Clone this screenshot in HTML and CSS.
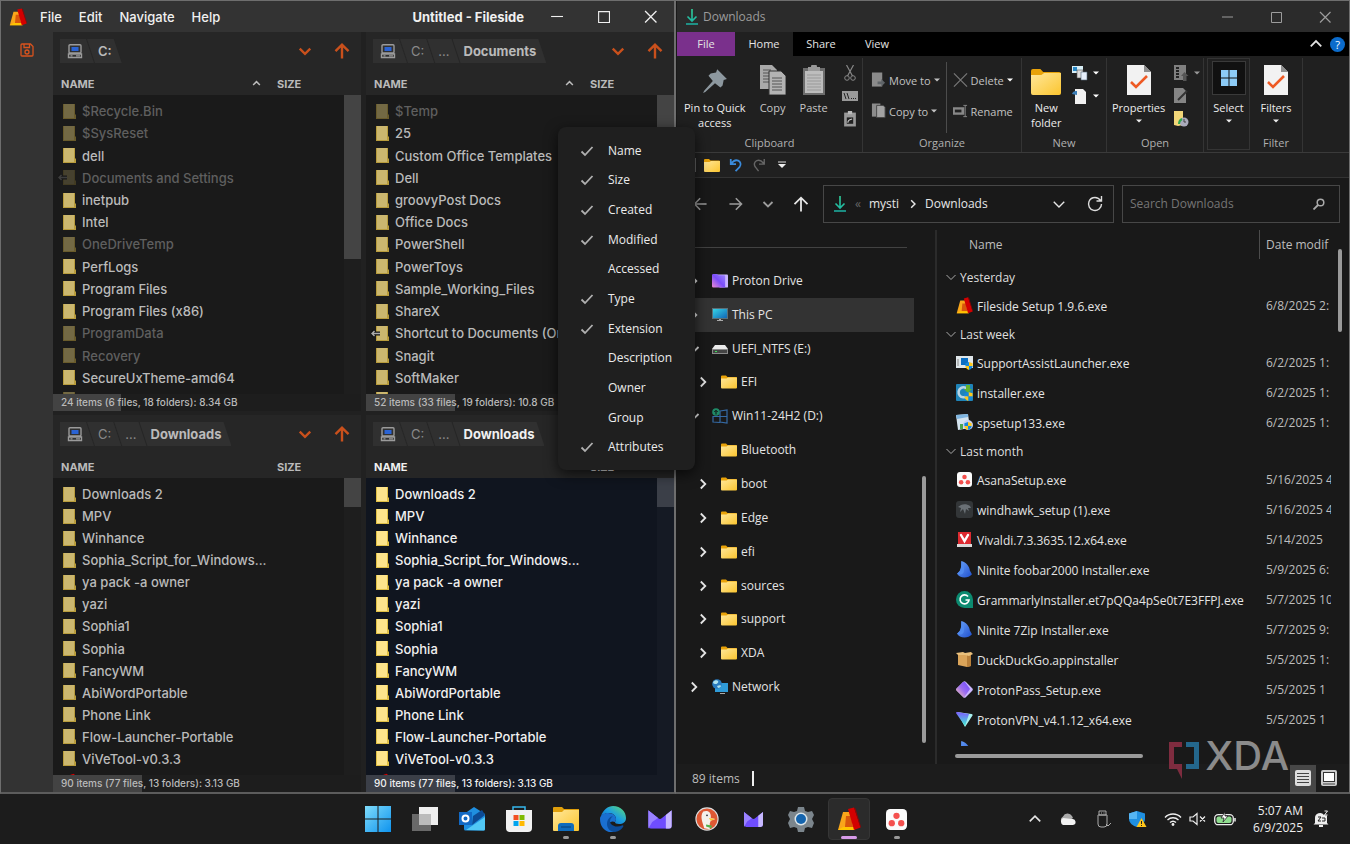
FILE: index.html
```html
<!DOCTYPE html>
<html lang="en">
<head>
<meta charset="utf-8">
<title>Desktop</title>
<link rel="stylesheet" href="styles.css">
</head>
<body>
<svg class="defs" aria-hidden="true">
  <linearGradient id="g-fold" x1="0" y1="0" x2="1" y2="1"><stop offset="0" stop-color="#ffe79a"/><stop offset="1" stop-color="#fbc52f"/></linearGradient>
  <linearGradient id="g-edge" x1="0" y1="1" x2="1" y2="0"><stop offset="0" stop-color="#0b57b5"/><stop offset=".5" stop-color="#1b9de2"/><stop offset="1" stop-color="#5fe070"/></linearGradient>
  <linearGradient id="g-win" x1="0" y1="0" x2="1" y2="1"><stop offset="0" stop-color="#7fdcfb"/><stop offset="1" stop-color="#0e93ee"/></linearGradient>
  <linearGradient id="g-proton" x1="0" y1="1" x2="1" y2="0"><stop offset="0" stop-color="#f08bd2"/><stop offset=".5" stop-color="#7a4dfa"/><stop offset="1" stop-color="#9d86ff"/></linearGradient>
  <linearGradient id="g-pass" x1="0" y1="1" x2="1" y2="0"><stop offset="0" stop-color="#ffc9a8"/><stop offset=".5" stop-color="#9b6cf2"/><stop offset="1" stop-color="#6d4aff"/></linearGradient>
  <linearGradient id="g-vpn" x1="0" y1="0" x2="0" y2="1"><stop offset="0" stop-color="#7d5cff"/><stop offset="1" stop-color="#3ff0d0"/></linearGradient>
  <linearGradient id="g-nin" x1="0" y1="0" x2="1" y2="1"><stop offset="0" stop-color="#6ea5f7"/><stop offset="1" stop-color="#1e4fd0"/></linearGradient>
  <linearGradient id="g-screen" x1="0" y1="0" x2="1" y2="1"><stop offset="0" stop-color="#35d3e6"/><stop offset="1" stop-color="#1166b5"/></linearGradient>
  <linearGradient id="g-dl" x1="0" y1="0" x2="0" y2="16" gradientUnits="userSpaceOnUse"><stop offset="0" stop-color="#2fd09a"/><stop offset="1" stop-color="#1bb0a4"/></linearGradient>
  <symbol id="logo" viewBox="0 0 24 24"><path d="M6 5h7l5 18H1z" fill="#f9a51a"/><path d="M9 9h5l2 11H8z" fill="#d8560b"/><path d="M7 20h10l1 3H1l5-3z" fill="#ffc400"/><path d="M11 2l6-1.500 6.500 20L17 23z" fill="#d30000"/><path d="M17 .5l1.500 1L24 20l-.5.500z" fill="#990000"/></symbol>
  <symbol id="sheet" viewBox="0 0 13 15"><path d="M0 0h12v10l1 1v4H0z" fill="#b89c3c"/><path d="M1 0h10v14H1z" fill="#cbb76f"/></symbol>
  <symbol id="sheet-lit" viewBox="0 0 13 15"><path d="M0 0h12v10l1 1v4H0z" fill="#e0bf45"/><path d="M1 0h10v14H1z" fill="#fde48c"/></symbol>
  <symbol id="sheet-link" viewBox="0 0 18 15"><path d="M5 0h12v10l1 1v4H5z" fill="#b89c3c"/><path d="M6 0h10v14H6z" fill="#cbb76f"/><path d="M0 7.500h9M3.500 5L1 7.500 3.500 10" stroke="#111" stroke-width="4" fill="none"/><path d="M1 7.500h8M3.500 5L1 7.500 3.500 10" stroke="#aaa" stroke-width="1.500" fill="none"/></symbol>
  <symbol id="pc" viewBox="0 0 16 16"><path d="M3 1.700h10a1 1 0 011 1V9a1 1 0 01-1 1H3a1 1 0 01-1-1V2.700a1 1 0 011-1zM1.500 11h13v3.500h-13z" fill="none" stroke="#9b9b9b" stroke-width="1.400"/><path d="M4.500 4h7v4h-7z" fill="#2a63d4"/><path d="M3.500 12.800h2M9 12.800h4" stroke="#9b9b9b" stroke-width="1.200"/></symbol>
  <symbol id="chev" viewBox="0 0 12 12"><path d="M1.500 4L6 8.500 10.500 4" fill="none" stroke="currentColor" stroke-width="var(--w,2)"/></symbol>
  <symbol id="chevr" viewBox="0 0 12 12"><path d="M3.800 1.500L8.300 6l-4.500 4.500" fill="none" stroke="currentColor" stroke-width="1.800"/></symbol>
  <symbol id="up" viewBox="0 0 16 16"><path d="M8 15.500V2M1.500 8.200L8 1.700l6.500 6.500" fill="none" stroke="currentColor" stroke-width="var(--w,2.400)"/></symbol>
  <symbol id="check" viewBox="0 0 14 12"><path d="M1.500 6.500l3.500 3.500 7.500-8" fill="none" stroke="#b0b0b0" stroke-width="1.800"/></symbol>
  <symbol id="folder" viewBox="0 0 16 13"><path d="M0 1a1 1 0 011-1h4l1.500 1.500H15a1 1 0 011 1V5H0z" fill="#e8a209"/><path d="M0 3h5.500L7 2h9v10a1 1 0 01-1 1H1a1 1 0 01-1-1z" fill="url(#g-fold)"/></symbol>
  <symbol id="dl" viewBox="0 0 12 16"><path d="M6 0v12M1.500 7.500L6 12l4.500-4.500M0 15h12" fill="none" stroke="url(#g-dl)" stroke-width="1.600"/></symbol>
  <symbol id="min" viewBox="0 0 12 12"><path d="M1 6h11" stroke="currentColor"/></symbol>
  <symbol id="max" viewBox="0 0 12 12"><path d="M1.500 1.500h10v10h-10z" fill="none" stroke="currentColor"/></symbol>
  <symbol id="close" viewBox="0 0 12 12"><path d="M1 1l10.500 10.500M11.500 1L1 11.500" stroke="currentColor" stroke-width="1.200"/></symbol>
  <symbol id="tri" viewBox="0 0 6 4"><path d="M0 .5h6L3 3.500z" fill="currentColor"/></symbol>
  <symbol id="doc" viewBox="0 0 24 30"><path d="M0 0h17l7 7v23H0z" fill="#f2f2f2"/><path d="M17 0v7h7z" fill="#8f8f8f"/><path d="M4 17l5 5L20 11" fill="none" stroke="#ee5a24" stroke-width="2.600"/></symbol>
  <symbol id="asana" viewBox="0 0 20 20"><rect width="20" height="20" rx="4" fill="#fbfbfb"/><circle cx="10" cy="6.500" r="3" fill="#f4504e"/><circle cx="5.500" cy="13.500" r="3" fill="#f4504e"/><circle cx="14.500" cy="13.500" r="3" fill="#f4504e"/></symbol>
  <symbol id="ninite" viewBox="0 0 16 16"><path d="M5 0c4 1 8 5 8 9l2 3.500c-2 2-4 3-7 3S2 14 1 12l2.500-2.500C5 7 5 4 5 0z" fill="url(#g-nin)"/><path d="M5 0c0 4 0 7-1.500 9.500L1 12c4 1.500 6 .5 6.500-2.500S7 3 5 0z" fill="#4f8af0"/></symbol>
  <symbol id="shield" viewBox="0 0 10 10"><path d="M5 0l4.500 1.500V5H5z" fill="#ffc91a"/><path d="M5 0L.5 1.500V5H5z" fill="#1688dc"/><path d="M.5 5H5v5C2 9 .5 7 .5 5z" fill="#ffc91a"/><path d="M5 5h4.500C9.500 7 8 9 5 10z" fill="#1688dc"/></symbol>
  <symbol id="mail" viewBox="0 0 24 20"><path d="M0 1l10 8a3 3 0 004 0L24 1v16a3 3 0 01-3 3H3a3 3 0 01-3-3z" fill="#6f4dff"/><path d="M18 6l6-5v16a3 3 0 01-3 3h-3z" fill="#c7b8ff"/><path d="M0 1l10 8-6 4-4 7z" fill="#9a82ff"/></symbol>
</svg>

<main class="desktop">
  <section class="win fileside" aria-label="Fileside">
    <header class="titlebar">
      <svg class="i18"><use href="#logo"/></svg>
      <nav class="menubar"><button>File</button><button>Edit</button><button>Navigate</button><button>Help</button></nav>
      <h1>Untitled - Fileside</h1>
      <div class="winbtns"><button aria-label="Minimize"><svg><use href="#min"/></svg></button><button aria-label="Maximize"><svg><use href="#max"/></svg></button><button aria-label="Close"><svg><use href="#close"/></svg></button></div>
    </header>
    <div class="fs-body">
      <aside class="rail"><button aria-label="Save layout"><svg viewBox="0 0 14 14"><path d="M2 1h8.500L13 3.500V12a1 1 0 01-1 1H2a1 1 0 01-1-1V2a1 1 0 011-1zM4 1v3.500h5.500V1" fill="none" stroke="#d9531e" stroke-width="1.300"/><circle cx="7" cy="9" r="2" fill="none" stroke="#d9531e" stroke-width="1.300"/></svg></button></aside>
      <div class="panes">
        <section class="pane">
          <div class="crumbs"><a href="#"><svg><use href="#pc"/></svg></a><a href="#" class="here plain">C:</a><span class="tools"><button aria-label="History"><svg class="i14"><use href="#chev"/></svg></button><button aria-label="Up"><svg class="i16"><use href="#up"/></svg></button></span></div>
          <div class="cols"><span>NAME<svg class="sort"><use href="#chev"/></svg></span><span>SIZE</span></div>
          <div class="listing"><ul>
            <li class="dim"><svg><use href="#sheet"/></svg>$Recycle.Bin</li>
            <li class="dim"><svg><use href="#sheet"/></svg>$SysReset</li>
            <li><svg><use href="#sheet"/></svg>dell</li>
            <li class="dim faint"><svg class="lnk"><use href="#sheet-link"/></svg>Documents and Settings</li>
            <li><svg><use href="#sheet"/></svg>inetpub</li>
            <li><svg><use href="#sheet"/></svg>Intel</li>
            <li class="dim"><svg><use href="#sheet"/></svg>OneDriveTemp</li>
            <li><svg><use href="#sheet"/></svg>PerfLogs</li>
            <li><svg><use href="#sheet"/></svg>Program Files</li>
            <li><svg><use href="#sheet"/></svg>Program Files (x86)</li>
            <li class="dim"><svg><use href="#sheet"/></svg>ProgramData</li>
            <li class="dim"><svg><use href="#sheet"/></svg>Recovery</li>
            <li><svg><use href="#sheet"/></svg>SecureUxTheme-amd64</li>
          </ul><div class="peek dim"><svg><use href="#sheet"/></svg></div><div class="scroll"><i class="long"></i></div></div>
          <div class="stat"><i class="s22"></i><span>24 items (6 files, 18 folders): 8.34 GB</span></div>
        </section>
        <section class="pane">
          <div class="crumbs"><a href="#"><svg><use href="#pc"/></svg></a><a href="#">C:</a><a href="#">...</a><a href="#" class="here">Documents</a><span class="tools"><button aria-label="History"><svg class="i14"><use href="#chev"/></svg></button><button aria-label="Up"><svg class="i16"><use href="#up"/></svg></button></span></div>
          <div class="cols"><span>NAME<svg class="sort"><use href="#chev"/></svg></span><span>SIZE</span></div>
          <div class="listing"><ul>
            <li class="dim"><svg><use href="#sheet"/></svg>$Temp</li>
            <li><svg><use href="#sheet"/></svg>25</li>
            <li><svg><use href="#sheet"/></svg>Custom Office Templates</li>
            <li><svg><use href="#sheet"/></svg>Dell</li>
            <li><svg><use href="#sheet"/></svg>groovyPost Docs</li>
            <li><svg><use href="#sheet"/></svg>Office Docs</li>
            <li><svg><use href="#sheet"/></svg>PowerShell</li>
            <li><svg><use href="#sheet"/></svg>PowerToys</li>
            <li><svg><use href="#sheet"/></svg>Sample_Working_Files</li>
            <li><svg><use href="#sheet"/></svg>ShareX</li>
            <li><svg class="lnk"><use href="#sheet-link"/></svg>Shortcut to Documents (On</li>
            <li><svg><use href="#sheet"/></svg>Snagit</li>
            <li><svg><use href="#sheet"/></svg>SoftMaker</li>
          </ul><div class="peek"><svg><use href="#sheet"/></svg></div><div class="scroll"><i></i></div></div>
          <div class="stat"><i class="s29"></i><span>52 items (33 files, 19 folders): 10.8 GB</span></div>
        </section>
        <section class="pane">
          <div class="crumbs"><a href="#"><svg><use href="#pc"/></svg></a><a href="#">C:</a><a href="#">...</a><a href="#" class="here">Downloads</a><span class="tools"><button aria-label="History"><svg class="i14"><use href="#chev"/></svg></button><button aria-label="Up"><svg class="i16"><use href="#up"/></svg></button></span></div>
          <div class="cols"><span>NAME</span><span>SIZE</span></div>
          <div class="listing"><ul>
            <li><svg><use href="#sheet"/></svg>Downloads 2</li>
            <li><svg><use href="#sheet"/></svg>MPV</li>
            <li><svg><use href="#sheet"/></svg>Winhance</li>
            <li><svg><use href="#sheet"/></svg>Sophia_Script_for_Windows...</li>
            <li><svg><use href="#sheet"/></svg>ya pack -a owner</li>
            <li><svg><use href="#sheet"/></svg>yazi</li>
            <li><svg><use href="#sheet"/></svg>Sophia1</li>
            <li><svg><use href="#sheet"/></svg>Sophia</li>
            <li><svg><use href="#sheet"/></svg>FancyWM</li>
            <li><svg><use href="#sheet"/></svg>AbiWordPortable</li>
            <li><svg><use href="#sheet"/></svg>Phone Link</li>
            <li><svg><use href="#sheet"/></svg>Flow-Launcher-Portable</li>
            <li><svg><use href="#sheet"/></svg>ViVeTool-v0.3.3</li>
          </ul><div class="peek low"><svg><use href="#logo"/></svg></div><div class="scroll"><i></i></div></div>
          <div class="stat"><i class="s29"></i><span>90 items (77 files, 13 folders): 3.13 GB</span></div>
        </section>
        <section class="pane active">
          <div class="crumbs"><a href="#"><svg><use href="#pc"/></svg></a><a href="#">C:</a><a href="#">...</a><a href="#" class="here">Downloads</a><span class="tools"><button aria-label="History"><svg class="i14"><use href="#chev"/></svg></button><button aria-label="Up"><svg class="i16"><use href="#up"/></svg></button></span></div>
          <div class="cols"><span>NAME</span><span>SIZE</span></div>
          <div class="listing"><ul>
            <li><svg><use href="#sheet-lit"/></svg>Downloads 2</li>
            <li><svg><use href="#sheet-lit"/></svg>MPV</li>
            <li><svg><use href="#sheet-lit"/></svg>Winhance</li>
            <li><svg><use href="#sheet-lit"/></svg>Sophia_Script_for_Windows...</li>
            <li><svg><use href="#sheet-lit"/></svg>ya pack -a owner</li>
            <li><svg><use href="#sheet-lit"/></svg>yazi</li>
            <li><svg><use href="#sheet-lit"/></svg>Sophia1</li>
            <li><svg><use href="#sheet-lit"/></svg>Sophia</li>
            <li><svg><use href="#sheet-lit"/></svg>FancyWM</li>
            <li><svg><use href="#sheet-lit"/></svg>AbiWordPortable</li>
            <li><svg><use href="#sheet-lit"/></svg>Phone Link</li>
            <li><svg><use href="#sheet-lit"/></svg>Flow-Launcher-Portable</li>
            <li><svg><use href="#sheet-lit"/></svg>ViVeTool-v0.3.3</li>
          </ul><div class="peek low"><svg><use href="#logo"/></svg></div><div class="scroll"><i></i></div></div>
          <div class="stat"><i class="s29"></i><span>90 items (77 files, 13 folders): 3.13 GB</span></div>
        </section>
      </div>
    </div>
    <menu class="popup">
      <li><svg><use href="#check"/></svg><button>Name</button></li>
      <li><svg><use href="#check"/></svg><button>Size</button></li>
      <li><svg><use href="#check"/></svg><button>Created</button></li>
      <li><svg><use href="#check"/></svg><button>Modified</button></li>
      <li><svg></svg><button>Accessed</button></li>
      <li><svg><use href="#check"/></svg><button>Type</button></li>
      <li><svg><use href="#check"/></svg><button>Extension</button></li>
      <li><svg></svg><button>Description</button></li>
      <li><svg></svg><button>Owner</button></li>
      <li><svg></svg><button>Group</button></li>
      <li><svg><use href="#check"/></svg><button>Attributes</button></li>
    </menu>
  </section>

  <section class="win explorer" aria-label="Downloads">
    <header class="titlebar">
      <svg class="dlicon"><use href="#dl"/></svg><h1>Downloads</h1>
      <div class="winbtns"><button aria-label="Minimize"><svg><use href="#min"/></svg></button><button aria-label="Maximize"><svg><use href="#max"/></svg></button><button aria-label="Close"><svg><use href="#close"/></svg></button></div>
    </header>
    <nav class="tabs"><button class="file">File</button><button class="on">Home</button><button>Share</button><button>View</button>
      <button class="fold" aria-label="Collapse ribbon"><svg class="i14 flip"><use href="#chev"/></svg></button><button class="help">?</button></nav>
    <div class="ribbon">
      <div class="group clip">
        <div class="tools-row">
          <button class="big lit"><svg viewBox="0 0 24 24"><path d="M14 2l9 9-3 1-1 5-2 2-5-4-9 8-2 1 1-2 8-9-4-5 2-2 5-1z" fill="#8d989f"/></svg>Pin to Quick<br>access</button>
          <button class="big"><svg class="tall" viewBox="0 0 26 30"><path d="M0 0h12l5 5v19H0z" fill="#a9a9a9"/><path d="M3 5h8M3 8h9M3 11h9M3 14h9M3 17h9" stroke="#555"/><path d="M9 6h12l5 5v19H9z" fill="#b3b3b3" stroke="#333"/><path d="M12 13h10M12 16h10M12 19h10M12 22h10M12 25h10" stroke="#555"/></svg>Copy</button>
          <button class="big"><svg class="tall" viewBox="0 0 22 30"><path d="M0 3h22v27H0z" fill="#6d6d6d"/><path d="M2 6h18v22H2z" fill="#bdbdbd"/><path d="M5 2h3a3 3 0 016 0h3v4H5z" fill="#999"/><path d="M4 10h14M4 13h14M4 16h14M4 19h14M4 22h14M4 25h14" stroke="#999"/></svg>Paste</button>
          <div class="stack"><button aria-label="Cut"><svg viewBox="0 0 12 16"><path d="M2.500 0L8.500 11M9.500 0L3.500 11" stroke="#888" stroke-width="1.200"/><circle cx="3" cy="13" r="2.300" fill="none" stroke="#888"/><circle cx="9" cy="13" r="2.300" fill="none" stroke="#888"/></svg></button><button aria-label="Copy path"><svg class="wide" viewBox="0 0 16 10"><path d="M0 0h16v10H0z" fill="#999"/><path d="M2 2l2 6M5 2l2 6M9 7.500h1M11 7.500h1M13 7.500h1" stroke="#222"/></svg></button><button aria-label="Paste shortcut"><svg viewBox="0 0 12 15"><path d="M.5 1.500h11v13H.5z" fill="#999"/><path d="M4 0h4v3H4z" fill="#bbb"/><path d="M3 6h6v6H3z" fill="#222"/><path d="M4 11c0-3 2-3 4-3.500" stroke="#ccc" fill="none"/></svg></button></div>
        </div><h2>Clipboard</h2>
      </div>
      <div class="group org">
        <div class="tools-row">
          <div class="pair"><button><svg viewBox="0 0 16 16"><path d="M1 0h11v15H1z" fill="#8b8b8b"/><path d="M15 11l-4-4v2.500H7v3h4V15z" fill="#5f6468"/></svg>Move to<svg class="tri"><use href="#tri"/></svg></button><button><svg viewBox="0 0 16 16"><path d="M1 0h9v14H1z" fill="#8b8b8b"/><path d="M6 2h7l2 2v11H6z" fill="#a2a2a2" stroke="#444"/></svg>Copy to<svg class="tri"><use href="#tri"/></svg></button></div>
          <div class="pair split"><button><svg viewBox="0 0 16 16"><path d="M1 1l14 14M15 1L1 15" stroke="#777" stroke-width="1.300"/></svg>Delete<svg class="tri white"><use href="#tri"/></svg></button><button><svg viewBox="0 0 16 16"><path d="M0 4h12v8H0z" fill="#888"/><path d="M2 6.500h7v3H2z" fill="#222"/><path d="M11 2h4M13 2v12M11 14h4" stroke="#888"/></svg>Rename</button></div>
        </div><h2>Organize</h2>
      </div>
      <div class="group new">
        <div class="tools-row">
          <button class="big lit"><svg class="tall" viewBox="0 -2 16 15" preserveAspectRatio="none"><use href="#folder" width="16" height="13"/></svg>New<br>folder</button>
          <div class="stack two"><button aria-label="New item"><svg viewBox="0 0 16 16"><path d="M0 1h11v7H0z" fill="#d8eef6"/><path d="M1 2h4v4H1z" fill="#2b88c4"/><path d="M5 5h6v8H5z" fill="#ddd" stroke="#555" stroke-width=".6"/><path d="M9 7h6v8H9z" fill="#e6effb" stroke="#567" stroke-width=".6"/></svg><svg class="tri"><use href="#tri"/></svg></button><button aria-label="Easy access"><svg viewBox="0 0 16 16"><path d="M3 1h8l3 3v12H3z" fill="#f1f1f1"/><path d="M0 6c1-3 3-3 5-3v4z" fill="#3c7fb8"/></svg><svg class="tri"><use href="#tri"/></svg></button></div>
        </div><h2>New</h2>
      </div>
      <div class="group open">
        <div class="tools-row">
          <button class="big lit"><svg class="tall"><use href="#doc"/></svg>Properties<svg class="tri"><use href="#tri"/></svg></button>
          <div class="stack"><button aria-label="Open"><svg viewBox="0 0 14 16"><path d="M0 0h12v15H0z" fill="#808080"/><path d="M2 3h3M2 6h3M2 9h3M2 12h3" stroke="#222" stroke-width="2"/><path d="M10.500 7l4 4h-2v5H9v-5H7z" fill="#555"/></svg><svg class="tri grey"><use href="#tri"/></svg></button><button aria-label="Edit"><svg viewBox="0 0 14 16"><path d="M0 0h9l3 3v12H0z" fill="#858585"/><path d="M4 12L13 3" stroke="#333" stroke-width="2"/></svg></button><button aria-label="History"><svg viewBox="0 0 14 16"><path d="M0 0h9v14l-5 1-4-1z" fill="#f2d678"/><circle cx="10" cy="11" r="4.500" fill="#aab"/><path d="M10 8v3h2" stroke="#444" fill="none"/><path d="M5 13c0-3 1-4 3-5" stroke="#2fa84f" stroke-width="2" fill="none"/></svg></button></div>
        </div><h2>Open</h2>
      </div>
      <div class="group sel">
        <button class="big lit"><span class="box"><svg viewBox="0 0 16 16"><path d="M0 0h7.500v7.500H0zM8.500 0H16v7.500H8.500zM0 8.500h7.500V16H0zM8.500 8.500H16V16H8.500z" fill="#8ccbf6"/></svg></span>Select<svg class="tri"><use href="#tri"/></svg></button>
      </div>
      <div class="group filt">
        <div class="tools-row"><button class="big lit"><svg class="tall"><use href="#doc"/></svg>Filters<svg class="tri"><use href="#tri"/></svg></button></div><h2>Filter</h2>
      </div>
    </div>
    <div class="quick"><i></i><button aria-label="New folder"><svg class="fold16"><use href="#folder"/></svg></button><button aria-label="Undo"><svg class="i14" viewBox="0 0 16 16"><path d="M2 1v6h6M2.500 6.500C5 3 8 2 10.500 3s4 4.500 1.500 7.500L7.500 15" fill="none" stroke="#3a8bdc" stroke-width="2"/></svg></button><button aria-label="Redo"><svg class="i14" viewBox="0 0 16 16"><path d="M14 1v6H8M13.500 6.500C11 3 8 2 5.500 3S1.500 7.500 4 10.500L7.500 15" fill="none" stroke="#666" stroke-width="1.600"/></svg></button><button aria-label="Customize"><svg class="cust" viewBox="0 0 8 8"><path d="M0 1h8" stroke="#ddd"/><path d="M0 3h8L4 7z" fill="#eee"/></svg></button></div>
    <div class="navrow">
      <button class="grey" aria-label="Back"><svg class="i14 left"><use href="#up"/></svg></button><button class="grey" aria-label="Forward"><svg class="i14 right"><use href="#up"/></svg></button><button class="grey" aria-label="Recent"><svg class="i12"><use href="#chev"/></svg></button><button aria-label="Up"><svg class="i16"><use href="#up"/></svg></button>
      <div class="addr"><svg class="dlicon"><use href="#dl"/></svg><span class="more">«</span><a href="#">mysti</a><svg class="i10"><use href="#chevr"/></svg><a href="#">Downloads</a><button class="last" aria-label="Previous locations"><svg class="i14"><use href="#chev"/></svg></button><button aria-label="Refresh"><svg class="i16" viewBox="0 0 16 16"><path d="M14.500 8A6.500 6.500 0 112 5.500C3 3 5.500 1.500 8 1.500c2.500 0 4.500 1.300 6 3.500M14.500 0v5h-5" fill="none" stroke="#ddd" stroke-width="1.400"/></svg></button></div>
      <label class="search"><input type="text" placeholder="Search Downloads" aria-label="Search Downloads"><svg class="i12" viewBox="0 0 12 12"><circle cx="7.500" cy="4.500" r="3.300" fill="none" stroke="#aaa" stroke-width="1.500"/><path d="M5 7L.5 11.500" stroke="#aaa" stroke-width="1.800"/></svg></label>
    </div>
    <div class="ex-body">
      <nav class="tree"><hr>
        <ul>
          <li><svg class="i12"><use href="#chevr"/></svg><svg class="ic" viewBox="0 0 17 16"><path d="M5 1h11a1 1 0 011 1v12a1 1 0 01-1 1H8z" fill="#c9b5ff"/><path d="M0 2a1.500 1.500 0 011.500-1.500H5L7 2h6a1 1 0 011 1v12H1.500A1.500 1.500 0 010 13.500z" fill="url(#g-proton)"/></svg>Proton Drive</li>
          <li class="cur"><svg class="i12"><use href="#chevr"/></svg><svg class="ic" viewBox="0 0 16 14"><path d="M0 0h16v11H0z" fill="#5a7078"/><path d="M1 1h14v9H1z" fill="url(#g-screen)"/><path d="M5 13h6v-1H9v-1H7v1H5z" fill="#aaa"/></svg>This PC</li>
          <li><svg class="i12"><use href="#chev"/></svg><svg class="ic" viewBox="0 0 16 14"><path d="M3 3h10l3 4H0z" fill="#e9e9e9"/><path d="M0 7h16v5H0z" fill="#8a8a8a"/><path d="M1 8h14v3H1z" fill="#444"/><path d="M3 9h2v1H3z" fill="#3ee05a"/></svg>UEFI_NTFS (E:)</li>
          <li class="sub"><svg class="i12"><use href="#chevr"/></svg><svg class="ic"><use href="#folder"/></svg>EFI</li>
          <li><svg class="i12"><use href="#chev"/></svg><svg class="ic" viewBox="0 0 16 16"><path d="M8 3l7-1v13l-7-1zM1 8v6l7 .5M1 8.500h14" fill="none" stroke="#356aa5" stroke-width="1.200"/><circle cx="4" cy="4" r="3.800" fill="#1f8a67"/><path d="M4 6.500v-4M2.300 4L4 2.300 5.700 4" stroke="#111" fill="none"/></svg>Win11-24H2 (D:)</li>
          <li class="sub"><svg class="i12"></svg><svg class="ic"><use href="#folder"/></svg>Bluetooth</li>
          <li class="sub"><svg class="i12"><use href="#chevr"/></svg><svg class="ic"><use href="#folder"/></svg>boot</li>
          <li class="sub"><svg class="i12"><use href="#chevr"/></svg><svg class="ic"><use href="#folder"/></svg>Edge</li>
          <li class="sub"><svg class="i12"><use href="#chevr"/></svg><svg class="ic"><use href="#folder"/></svg>efi</li>
          <li class="sub"><svg class="i12"><use href="#chevr"/></svg><svg class="ic"><use href="#folder"/></svg>sources</li>
          <li class="sub"><svg class="i12"><use href="#chevr"/></svg><svg class="ic"><use href="#folder"/></svg>support</li>
          <li class="sub"><svg class="i12"><use href="#chevr"/></svg><svg class="ic"><use href="#folder"/></svg>XDA</li>
          <li><svg class="i12"><use href="#chevr"/></svg><svg class="ic" viewBox="0 0 16 16"><path d="M3 4h13v9H3z" fill="#2f9bd8"/><path d="M8 15h5v-1H8z" fill="#aaa"/><circle cx="5" cy="5" r="4.800" fill="#2a7cc0"/><path d="M1 3c2-2 4-2 5-1S5 5 4 5s-3 0-3-2zM5 7c2-1 4-1 4 0s-2 2-3 2z" fill="#aee3ef"/></svg>Network</li>
        </ul><i class="thumb"></i>
      </nav>
      <div class="files">
        <div class="viewport">
        <table>
          <colgroup><col><col class="datecol"></colgroup>
          <thead><tr><th>Name</th><th>Date modif</th></tr></thead>
          <tbody>
            <tr class="grp"><th colspan="2"><svg class="i12"><use href="#chev"/></svg>Yesterday</th></tr>
            <tr><td><svg><use href="#logo"/></svg>Fileside Setup 1.9.6.exe</td><td>6/8/2025 2:</td></tr>
            <tr class="grp"><th colspan="2"><svg class="i12"><use href="#chev"/></svg>Last week</th></tr>
            <tr><td><svg viewBox="0 0 17 17"><path d="M0 2h17v12H0z" fill="#dfe6ea"/><path d="M5 4h7v7H5z" fill="#0b6fc4"/><path d="M2 5v7" stroke="#888"/><use href="#shield" x="9" y="8" width="8" height="8"/></svg>SupportAssistLauncher.exe</td><td>6/2/2025 1:</td></tr>
            <tr><td><svg viewBox="0 0 17 17"><rect width="17" height="17" rx="1" fill="#1f84b8"/><path d="M12 6a5 5 0 10-1 6" fill="none" stroke="#b9d5e4" stroke-width="2.500"/><path d="M10 1h4v4h2l-4 4-4-4h2z" fill="#63b32e"/><use href="#shield" x="8" y="8" width="9" height="9"/></svg>installer.exe</td><td>6/2/2025 1:</td></tr>
            <tr><td><svg viewBox="0 0 17 17"><path d="M0 1l12-1 2 14-12 2z" fill="#d5e4ef"/><path d="M0 1l12-1v3L1 5z" fill="#7fb5e0"/><path d="M4 10h3v5H4z" fill="#4aa551"/><circle cx="12" cy="11" r="5" fill="#c7d0ef"/><use href="#shield" x="8" y="8" width="8" height="8"/></svg>spsetup133.exe</td><td>6/2/2025 1:</td></tr>
            <tr class="grp"><th colspan="2"><svg class="i12"><use href="#chev"/></svg>Last month</th></tr>
            <tr><td><svg viewBox="-1 0 17 17"><use href="#asana" width="15" height="15" y="1"/></svg>AsanaSetup.exe</td><td>5/16/2025 4</td></tr>
            <tr><td><svg viewBox="0 0 17 17"><rect width="17" height="17" rx="3" fill="#333638"/><path d="M2 6c3-3 8-4 12-1l1 2-3 0 1 3-3-2-1 5-2-5-3 3 1-4z" fill="#6a7075"/></svg>windhawk_setup (1).exe</td><td>5/16/2025 4</td></tr>
            <tr><td><svg viewBox="0 0 17 17"><path d="M2 1h13v12H2z" fill="#dd2a30"/><path d="M1 13h15v3H1z" fill="#d9d9d9"/><path d="M5 4l3.500 6L12 4" stroke="#fff" stroke-width="2.400" fill="none" stroke-linecap="round"/></svg>Vivaldi.7.3.3635.12.x64.exe</td><td>5/14/2025</td></tr>
            <tr><td><svg><use href="#ninite"/></svg>Ninite foobar2000 Installer.exe</td><td>5/9/2025 6:</td></tr>
            <tr><td><svg viewBox="0 0 17 17"><path d="M8.500 0A8.500 8.500 0 0117 8.500V17H8.500a8.500 8.500 0 010-17z" fill="#0c8a70"/><path d="M12 5.500A4.500 4.500 0 1013 9H9.500" fill="none" stroke="#fff" stroke-width="1.700"/></svg>GrammarlyInstaller.et7pQQa4pSe0t7E3FFPJ.exe</td><td>5/7/2025 10</td></tr>
            <tr><td><svg><use href="#ninite"/></svg>Ninite 7Zip Installer.exe</td><td>5/7/2025 9:</td></tr>
            <tr><td><svg viewBox="0 0 17 17"><path d="M2 4l9-1 4 1v11l-4 1-9-2z" fill="#dba55a"/><path d="M11 4l4-1v12l-4 1z" fill="#b9803a"/><path d="M2 4L0 2l7-1 2 1 6-1 2 2-4 2-4-1z" fill="#eac07c"/></svg>DuckDuckGo.appinstaller</td><td>5/5/2025 1:</td></tr>
            <tr><td><svg viewBox="0 0 17 17"><path d="M7 1a2 2 0 013 0l6 6a2 2 0 010 3l-6 6a2 2 0 01-3 0L1 10a2 2 0 010-3z" fill="#cbb8ff"/><path d="M7 1l2 0 4 5.500a2 2 0 010 3L8 16.500 1 10a2 2 0 010-3z" fill="url(#g-pass)"/></svg>ProtonPass_Setup.exe</td><td>5/5/2025 1</td></tr>
            <tr><td><svg viewBox="0 0 17 17"><path d="M1 1l14.500 2a1 1 0 011 1.500L9 16z" fill="#a9f0ef"/><path d="M0 2a1 1 0 011-1l12 2-4 12z" fill="url(#g-vpn)"/></svg>ProtonVPN_v4.1.12_x64.exe</td><td>5/5/2025 1</td></tr>
            <tr><td><svg><use href="#ninite"/></svg></td><td></td></tr>
          </tbody>
        </table>
        </div>
        <i class="thumb"></i><div class="hbar"><i></i></div>
      </div>
    </div>
    <footer class="exstat"><span>89 items</span><button class="on" aria-label="Details view"><svg viewBox="0 0 18 18"><rect x="1" y="1" width="16" height="16" rx="2" fill="#ddd"/><path d="M3 4.500h12M3 7.500h12M3 10.500h12M3 13.500h12" stroke="#444"/></svg></button><button aria-label="Large icons view"><svg viewBox="0 0 18 18"><rect x="1" y="1" width="16" height="16" rx="2" fill="#ccc"/><rect x="3.500" y="3.500" width="11" height="9" fill="#fff" stroke="#333"/><path d="M3 15h12" stroke="#444"/></svg></button></footer>
    <div class="mark"><svg viewBox="0 0 30 37"><path d="M13 0H0v27h8l5 10V22H5V5h8z" fill="#7e2c3f"/><path d="M17 0h13v27H17v-5h8V5h-8z" fill="#24678c"/></svg><span>XDA</span></div>
  </section>
</main>

<footer class="taskbar">
  <div class="apps">
    <button aria-label="Start"><svg viewBox="0 0 26 26"><path d="M0 0h12.500v12.500H0zM13.500 0H26v12.500H13.500zM0 13.500h12.500V26H0zM13.500 13.500H26V26H13.500z" fill="url(#g-win)"/></svg></button>
    <button aria-label="Task view"><svg viewBox="0 0 26 26"><path d="M7 1h19v18H7z" fill="#eee"/><path d="M0 8h19v17H0z" fill="#777" fill-opacity=".85"/><path d="M7 8h12v11H7z" fill="#bbb"/></svg></button>
    <button aria-label="Outlook"><svg viewBox="0 0 26 26"><path d="M5 8L15 1l11 7v15a1.500 1.500 0 01-1.500 1.500h-18A1.500 1.500 0 015 23z" fill="#1f8fe0"/><path d="M14 10l9-6 3 5-13 10z" fill="#0c4a94"/><path d="M7 24l19-13v12a1.500 1.500 0 01-1.500 1.500z" fill="#51c8f5"/><path d="M0 6h13v13H0z" fill="#1269c4"/><circle cx="6.500" cy="12.500" r="3" fill="none" stroke="#fff" stroke-width="2"/></svg></button>
    <button aria-label="Store"><svg viewBox="0 0 26 26"><path d="M7 5V1h12v4" fill="none" stroke="#35b7ec" stroke-width="1.500"/><path d="M0 4h26v18a4 4 0 01-4 4H4a4 4 0 01-4-4z" fill="#f1f1f1"/><path d="M7.500 9h5v5h-5z" fill="#f25022"/><path d="M13.500 9h5v5h-5z" fill="#7fba00"/><path d="M7.500 15h5v5h-5z" fill="#00a4ef"/><path d="M13.500 15h5v5h-5z" fill="#ffb900"/></svg></button>
    <button aria-label="File Explorer" class="run"><svg viewBox="0 0 26 26"><path d="M0 2a1 1 0 011-1h8l2 2h15v6H0z" fill="#e09f0b"/><path d="M0 6h9l2-2h15v20a1 1 0 01-1 1H1a1 1 0 01-1-1z" fill="url(#g-fold)"/><path d="M5 25v-5a3 3 0 013-3h10a3 3 0 013 3v5z" fill="#0f6cbd"/><path d="M8 21h10" stroke="#0a3f73"/></svg></button>
    <button aria-label="Edge" class="run"><svg viewBox="0 0 26 26"><path d="M1 10C3 4 8 0 13 0c8 0 13 6 13 12 0 4-3 6-7 6-3 0-4-1-4-2 0-.7 1-1 1-3 0-3-3-6-7-6-4 0-7 2-8 3z" fill="url(#g-edge)"/><path d="M0 13c0-4 4-6 8-6 5 0 8 3 8 6 0 2-1 2-1 3-2-1-5-1-6 2-1 3 2 7 6 8-8 2-15-4-15-13z" fill="#1a6fd0"/><path d="M13 10c-4 1-6 4-6 8 0 5 4 8 8 8 4-.5 7-3 8-5 1-1 0-2-1-1.500-4 2-9 1-11-1.500-2-3-.5-6 2-8z" fill="#0c4c9a"/></svg></button>
    <button aria-label="Proton Mail"><svg viewBox="0 0 24 24"><use href="#mail" x="1" y="3" width="22" height="18"/></svg></button>
    <button aria-label="DuckDuckGo"><svg class="ddg" viewBox="0 0 26 26"><circle cx="13" cy="13" r="12" fill="#de5833" stroke="#ddd" stroke-width="1.200"/><path d="M9 5c5-2 9 1 8 7l5 1-5 2-1 3v6l-6-1C8 16 5 10 9 5z" fill="#f4f0ea"/><path d="M15 12l7 1-5 2z" fill="#fbc52f"/><path d="M12 19l6 1v3l-6-2z" fill="#54b04a"/><circle cx="13" cy="9" r="1" fill="#334"/></svg></button>
    <button aria-label="Mail" class="small"><svg><use href="#mail"/></svg></button>
    <button aria-label="Settings"><svg viewBox="0 0 26 26"><path d="M10 1h6l1 4 3 1 4-1 2 4-2 4 2 4-2 5-4-1-3 1-1 4h-6l-1-4-3-1-4 1-2-5 2-4-2-4 2-4 4 1 3-1z" fill="#7b858c"/><circle cx="13" cy="13" r="6.500" fill="#dbe5ea"/><circle cx="13" cy="13" r="5" fill="#1464ae"/></svg></button>
    <button aria-label="Fileside" class="sel"><svg viewBox="0 0 24 24"><use href="#logo"/></svg></button>
    <button aria-label="Asana" class="run"><svg class="sq"><use href="#asana"/></svg></button>
  </div>
  <div class="tray">
    <button aria-label="Hidden icons"><svg class="i14 flip"><use href="#chev"/></svg></button>
    <svg viewBox="0 0 18 12"><path d="M5 11a4 4 0 01-1-7.500A5 5 0 0113 3l1 2z" fill="#aaa"/><path d="M4 12a4 4 0 010-7l9 1a3 3 0 011 6z" fill="#f2f2f2"/></svg>
    <svg viewBox="0 0 18 18"><path d="M5 1h7v4H5zM4 5h9v9a3 3 0 01-3 3H7a3 3 0 01-3-3zM7 3h1M9.500 3h1M12 14l2 2 3-3" fill="none" stroke="#aaa"/></svg>
    <svg viewBox="0 0 18 18"><path d="M8 1l8 2.500V9c0 4-4 7-8 8-4-1-8-4-8-8V3.500z" fill="#1f8fe0"/><path d="M8 1v8H0V3.500z" fill="#55b4f2"/><path d="M12.500 8l5 9h-10z" fill="#ffc61a"/><path d="M12.500 11v3M12.500 15v1" stroke="#222"/></svg>
    <button class="sys" aria-label="Network, sound, battery"><svg viewBox="0 0 18 14"><path d="M1 5.500a11 11 0 0116 0M3.500 8a8 8 0 0111 0M6 10.500a4.500 4.500 0 016 0" fill="none" stroke="#eee" stroke-width="1.400"/><circle cx="9" cy="12.500" r="1.400" fill="#eee"/></svg><svg viewBox="0 0 18 14"><path d="M1 5h3l4-3.500v11L4 9H1zM11 4.500l5 5M16 4.500l-5 5" fill="none" stroke="#eee" stroke-width="1.200"/></svg><svg class="bat" viewBox="0 0 22 14"><rect x=".7" y="2.700" width="18.600" height="10" rx="3.500" fill="none" stroke="#eee" stroke-width="1.300"/><rect x="2.500" y="4.500" width="15" height="6.500" rx="2" fill="#8fdc8f"/><path d="M21 6v3.500" stroke="#eee" stroke-width="1.500"/><path d="M11 0L7 6h3l-1 4 5-6h-3z" fill="#fff" stroke="#222" stroke-width=".8"/></svg></button>
    <button class="clock">5:07 AM<br>6/9/2025</button>
    <svg viewBox="0 0 18 18"><path d="M3 13V8a5 5 0 019-3h3v8l1.500 1.500H1.500z" fill="#eee"/><path d="M7 16h4" stroke="#eee" stroke-width="2"/><path d="M6 7h3l-3 4h3M13 1h4l-4 4h4M10 8h3v3h-3" stroke="#222" fill="none"/><path d="M12.500 1h3l-3 4h3" stroke="#eee" fill="none"/></svg>
  </div>
</footer>
</body>
</html>
```
FILE: styles.css
```css
* { box-sizing: border-box; }
body { margin: 0; height: 100vh; min-height: 760px; display: flex; flex-direction: column; background: #1c1c1c; color: #e4e4e4; font: 12px/18px "Open Sans", "Noto Sans", sans-serif; overflow: hidden; }
button { background: none; border: 0; padding: 0; color: inherit; font: inherit; display: flex; align-items: center; justify-content: center; }
a { color: inherit; text-decoration: none; }
ul, menu { list-style: none; margin: 0; padding: 0; }
h1, h2 { margin: 0; font: inherit; }
svg { flex: none; display: block; }
.defs { position: absolute; width: 0; height: 0; }
.i10 { width: 10px; height: 10px; }
.i12 { width: 12px; height: 12px; }
.i14 { width: 14px; height: 14px; }
.i16 { width: 16px; height: 16px; }
.i18 { width: 18px; height: 18px; }
.flip { transform: rotate(180deg); }
.left { transform: rotate(-90deg); }
.right { transform: rotate(90deg); }

.desktop { flex: 1; min-height: 0; display: grid; grid-template-columns: minmax(0, 676fr) minmax(0, 674fr); }
.win { position: relative; display: flex; flex-direction: column; min-height: 0; border: 1px solid #6e6e6e; border-bottom: 2px solid #5c5c5c; }
.titlebar { height: 31px; flex: none; display: flex; align-items: center; }
.winbtns { display: flex; }
.winbtns svg { width: 13px; height: 13px; }

.fileside { font: 13px/18px Inter, "Noto Sans", sans-serif; border-right: 2px solid #6e6e6e; background: #333; z-index: 1; }
.fileside .titlebar { padding-left: 8px; color: #f0f0f0; }
.menubar { display: flex; gap: 17px; margin-left: 13px; font-weight: 500; }
.fileside h1 { margin-left: auto; font-weight: 700; }
.fileside .winbtns button { width: 47px; }
.fileside .winbtns { margin-left: 9px; }
.fs-body { flex: 1; min-height: 0; display: flex; }
.rail { width: 52px; padding-top: 11px; }
.rail button { margin: 0 auto; }
.rail svg { width: 14px; height: 14px; }
.panes { flex: 1; min-width: 0; display: grid; grid-template: minmax(0, 379fr) minmax(0, 377fr) / minmax(0, 1fr) minmax(0, 1fr); gap: 4px 5px; background: #212121; }
.pane { display: flex; flex-direction: column; background: #262626; color: #bababa; min-height: 0; }
.crumbs { display: flex; padding: 7px 11px 0 7px; height: 31px; }
.crumbs a { height: 24px; display: flex; align-items: center; background: #303030; padding: 0 10px 0 11px; margin-left: -7px; clip-path: polygon(0 0, calc(100% - 8px) 0, 100% 100%, 8px 100%); color: #8a8a8a; }
.crumbs a:first-child { margin: 0; padding: 0 11px 0 7px; clip-path: polygon(0 0, calc(100% - 8px) 0, 100% 100%, 0 100%); }
.crumbs a svg { width: 16px; height: 16px; }
.crumbs .here { font-weight: 700; color: #bababa; }
.crumbs .plain { font-weight: 600; }
.tools { margin-left: auto; display: flex; gap: 22px; color: #c9501c; }
.cols { display: flex; height: 32px; align-items: center; padding: 9px 0 0 8px; font-size: 11px; line-height: 14px; font-weight: 700; }
.cols span { display: flex; align-items: center; justify-content: space-between; }
.cols span:first-child { width: 72%; padding-right: 16px; }
.sort { width: 9px; height: 9px; transform: rotate(180deg); }
.listing { flex: 1; min-height: 0; position: relative; background: #1a1a1a; padding: 5px 17px 0 10px; display: flex; flex-direction: column; overflow: hidden; font-weight: 500; }
.listing ul { flex: 1; min-height: 0; display: grid; grid-auto-rows: minmax(0, 1fr); }
.listing li { display: flex; align-items: center; gap: 6px; white-space: nowrap; }
.listing svg { width: 13px; height: 15px; }
.listing .lnk { width: 18px; margin-left: -5px; }
.pane .dim { color: #5f5f5f; }
.dim svg { opacity: .5; }
.faint svg { opacity: .25; }
.peek { height: 5px; padding-top: 3px; overflow: hidden; }
.low svg { width: 14px; margin-left: 1px; }
.scroll { position: absolute; top: 0; right: 0; bottom: 0; width: 17px; background: #1e1e1e; }
.scroll i { display: block; height: 29px; background: #444; }
.scroll .long { height: 55%; }
.fileside .pane:nth-child(2) .scroll i { height: 33%; }
.stat { position: relative; height: 17px; background: #1d1d1d; font-size: 10px; line-height: 17px; font-weight: 500; padding-left: 8px; }
.stat i { position: absolute; inset: 0 auto 0 0; background: #434343; }
.stat span { position: relative; }
.s22 { width: 22%; }
.s29 { width: 29%; }
.active, .active .here { color: #f0f0f0; }
.active .listing { background: #10151f; }
.active .scroll, .active .stat { background: #151a24; }
.active .scroll i, .active .stat i { background: #3b3f48; }

.popup { position: absolute; left: 557px; top: 126px; width: 137px; height: 343px; padding: 9px 0 8px 22px; background: #1f1f1f; border-radius: 8px; box-shadow: 0 4px 14px #000a; display: grid; grid-auto-rows: 1fr; font: 12px/18px "Open Sans", "Noto Sans", sans-serif; color: #ececec; }
.popup li { display: flex; align-items: center; gap: 14px; }
.popup svg { width: 14px; height: 12px; }

.explorer { background: #191919; border-left-width: 0; padding-left: 1px; }
.explorer .titlebar { background: #2b2b2b; color: #9c9c9c; padding-left: 9px; }
.explorer h1 { margin-left: 5px; }
.dlicon { width: 12px; height: 16px; }
.explorer .winbtns { margin-left: auto; }
.explorer .winbtns button { width: 49px; }
.explorer .winbtns svg { width: 12px; height: 12px; }
.tabs { display: flex; height: 24px; background: #000; font-size: 11px; flex: none; align-items: stretch; padding-right: 4px; }
.tabs button { width: 56px; }
.tabs .file { background: #7a308c; width: 58px; }
.tabs .on { background: #202020; width: 58px; }
.tabs .fold { width: 28px; margin-left: auto; --w: 1.5; }
.tabs .help { width: 15px; height: 15px; margin-top: 5px; border-radius: 50%; background: #0b6bcb; color: #fff; }
.ribbon { display: flex; flex: none; height: 97px; background: #202020; border-bottom: 1px solid #3a3a3a; font-size: 11px; line-height: 15px; color: #c2c2c2; padding-top: 2px; }
.group { display: flex; flex-direction: column; justify-content: space-between; border-right: 1px solid #343434; padding-bottom: 2px; }
.group h2 { text-align: center; color: #b0b0b0; }
.tools-row { display: flex; justify-content: center; }
.big { flex-direction: column; justify-content: flex-start; padding-top: 7px; text-align: center; color: #c6c6c6; white-space: nowrap; }
.big svg { width: 26px; height: 26px; margin: 2px 0 7px; }
.big .tall { height: 30px; margin: 0 0 5px; }
.big .tri, .tri { width: 6px; height: 4px; margin: 4px 0 0; }
.lit { color: #ececec; }
.clip { width: 186px; }
.clip .tools-row { gap: 14px; justify-content: flex-start; padding-left: 7px; }
.stack { display: flex; flex-direction: column; gap: 6px; padding-top: 6px; }
.stack button { height: 17px; gap: 5px; justify-content: flex-start; }
.stack svg { width: 16px; height: 16px; }
.stack .wide { height: 10px; }
.stack .tri, .pair .tri { width: 6px; height: 4px; margin: 0; }
.org { width: 159px; }
.org .tools-row { justify-content: flex-start; }
.pair { display: flex; flex-direction: column; gap: 15px; padding: 14px 6px 0 8px; }
.pair button { gap: 3px; height: 16px; justify-content: flex-start; white-space: nowrap; }
.pair svg { width: 15px; height: 16px; }
.split { border-left: 1px solid #4c4c4c; margin-top: 4px; padding: 10px 6px 14px; }
.white, .two .tri { color: #fff; }
.grey { color: #999; }
.new { width: 85px; }
.new .big .tall, .new .big svg { width: 30px; }
.new .tools-row { justify-content: flex-start; padding-left: 9px; gap: 10px; }
.open { width: 97px; }
.open .tools-row { gap: 8px; justify-content: flex-start; padding-left: 5px; }
.sel.group { width: 43px; margin: 0 0 2px 3px; border: 1px solid #343434; }
.sel .big { padding-top: 2px; }
.box { width: 34px; height: 34px; background: #111; border: 1px solid #3a3a3a; display: grid; place-items: center; margin-bottom: 5px; }
.big .box svg { width: 16px; height: 16px; margin: 0; }
.filt { width: 53px; }
.quick { height: 25px; flex: none; background: #202020; border-bottom: 1px solid #333; display: flex; align-items: center; padding-left: 18px; }
.quick i { width: 1px; height: 14px; background: #666; margin-right: 8px; }
.quick button { margin-right: 9px; }
.fold16 { width: 16px; height: 13px; }
.cust { width: 8px; height: 8px; margin-left: 3px; }
.navrow { height: 52px; flex: none; display: flex; align-items: center; padding: 0 9px 0 5px; color: #e6e6e6; }
.navrow > button { width: 36px; --w: 1.8; }
.navrow > button + button + button { width: 27px; }
.navrow > button + button + button + button { width: 39px; }
.navrow .grey { color: #9c9c9c; }
.addr { flex: 295 1 0; height: 38px; margin-left: 3px; border: 1px solid #474747; display: flex; align-items: center; padding: 0 10px; }
.addr a { margin: 0 9px 0 8px; }
.addr svg + a { margin-left: 7px; }
.more { margin-left: 9px; color: #666; }
.addr .last { margin: 0 21px 0 auto; --w: 1.2; }
.search { flex: 214 1 0; height: 38px; margin-left: 8px; border: 1px solid #474747; display: flex; align-items: center; padding: 0 14px 0 7px; }
.search input { flex: 1; min-width: 0; background: none; border: 0; color: #ddd; font: inherit; padding: 0; outline: 0; }
.search input::placeholder { color: #757575; opacity: 1; }
.ex-body { flex: 1; min-height: 0; display: flex; }
.tree { width: 260px; position: relative; border-right: 2px solid #2b2b2b; padding: 17px 21px 60px 0; display: flex; flex-direction: column; }
.tree hr { margin: 0 7px 16px 0; width: 97%; border: 0; border-top: 1px solid #424242; flex: none; align-self: flex-start; }
.tree ul { flex: 1; min-height: 0; display: grid; grid-auto-rows: minmax(0, 1fr); }
.tree li { display: flex; align-items: center; padding-left: 11px; --w: 1.800; }
.tree .sub { padding-left: 20px; }
.tree .ic { width: 16px; height: 16px; margin: 0 4px 0 12px; }
.tree .cur { background: #333; }
.thumb { position: absolute; background: #9a9a9a; border-radius: 2px; width: 4px; }
.tree .thumb { right: 9px; top: 46%; height: 50%; }
.files { flex: 1; min-width: 0; position: relative; padding-right: 18px; display: flex; flex-direction: column; }
.files .thumb { right: 7px; top: 19px; height: 83px; }
.viewport { flex: 1; min-height: 0; overflow: hidden; }
.files table { width: 100%; table-layout: fixed; border-collapse: collapse; white-space: nowrap; }
.datecol { width: 72px; }
.files th, .files td { padding: 0; text-align: left; font-weight: 400; height: 30px; overflow: hidden; }
.files thead th { color: #bdbdbd; height: 34px; padding: 0 0 4px 32px; }
.files thead th + th { padding-left: 7px; background: linear-gradient(#4c4c4c, #4c4c4c) 0 0 / 1px 29px no-repeat; }
.files .grp th { height: 27px; padding-left: 8px; color: #dedede; --w: 1; }
.grp svg { display: inline-block; vertical-align: -1px; margin-right: 3px; color: #aaa; }
.files td:first-child { padding-left: 19px; }
.files td + td { padding-left: 7px; color: #bdbdbd; }
.files td svg { display: inline-block; width: 17px; height: 17px; vertical-align: -3px; margin-right: 4px; }
.hbar { flex: none; height: 18px; padding: 8px 0 0 18px; }
.hbar i { display: block; width: 50%; height: 4px; border-radius: 2px; background: #9a9a9a; }
.exstat { height: 28px; flex: none; display: flex; align-items: center; background: #1c1c1c; padding: 0 7px 0 15px; }
.exstat span { padding-right: 12px; border-right: 2px solid #eee; line-height: 15px; margin-right: auto; color: #bdbdbd; }
.exstat button { width: 26px; height: 27px; }
.exstat .on { background: #474747; }
.exstat svg { width: 18px; height: 18px; }
.mark { position: absolute; right: 60px; bottom: 13px; display: flex; gap: 6px; align-items: flex-start; color: #8b8b8b; font: 500 40px/28px Inter, sans-serif; }
.mark svg { width: 30px; height: 37px; }

.taskbar { height: 50px; flex: none; display: flex; align-items: center; background: #1c1c1c; padding-right: 20px; }
.apps { display: flex; margin-left: 354px; }
.apps button { width: 47px; height: 42px; position: relative; }
.apps svg { width: 26px; height: 26px; }
.apps .small svg { width: 19px; height: 16px; }
.apps .ddg { width: 24px; height: 24px; }
.apps .sq { width: 21px; height: 21px; }
.apps .run::after, .apps .sel::after { content: ""; position: absolute; bottom: 1px; left: 50%; width: 6px; height: 3px; margin-left: -3px; border-radius: 2px; background: #999; }
.apps .sel { width: 42px; margin: 0 3px 0 4px; background: #2b2b2b; border: 1px solid #363636; border-radius: 4px; }
.apps .sel svg { width: 24px; height: 24px; }
.apps .sel::after { width: 16px; margin-left: -8px; bottom: 0; background: #d79be8; }
.tray { margin-left: auto; display: flex; align-items: center; gap: 17px; --w: 1.400; }
.tray svg { width: 18px; height: 18px; }
.tray .i14 { width: 14px; height: 14px; }
.sys { gap: 7px; }
.tray .bat { width: 22px; }
.clock { text-align: right; font-size: 12px; line-height: 17px; color: #eee; }
.clock + svg { margin-left: -8px; }
```
